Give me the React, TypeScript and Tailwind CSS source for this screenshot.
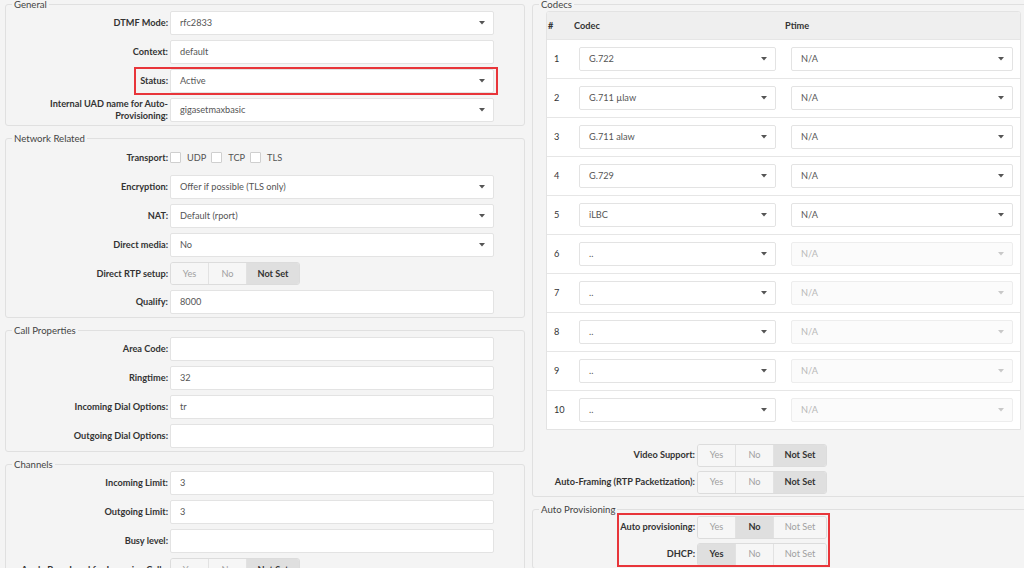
import { ReactNode } from 'react';
import clsx from 'clsx';

type Choice = 'Yes' | 'No' | 'Not Set';

function Caret({ light }: { light?: boolean }) {
  return (
    <svg width="6" height="4" viewBox="0 0 6 4" className={light ? 'fill-[#c8c8c8]' : 'fill-[#555]'}>
      <path d="M0 0h6L3 3.5z" />
    </svg>
  );
}

function Select({ value, disabled }: { value: string; disabled?: boolean }) {
  return (
    <div
      className={clsx(
        'flex h-[24px] w-full items-center justify-between rounded-[2px] border pl-[9px] pr-[8px] text-[9.2px]',
        disabled ? 'border-[#ededed] bg-[#fbfbfb] text-[#b8b8b8]' : 'border-[#e3e3e3] bg-white text-[#555]'
      )}
    >
      <span>{value}</span>
      <Caret light={disabled} />
    </div>
  );
}

function Input({ value }: { value?: string }) {
  return (
    <div className="flex h-[24px] w-full items-center rounded-[2px] border border-[#e3e3e3] bg-white pl-[9px] text-[9.2px] text-[#555]">
      {value}
    </div>
  );
}

function Toggle({ active }: { active: Choice }) {
  const options: Choice[] = ['Yes', 'No', 'Not Set'];
  return (
    <div className="flex h-[23px] w-[130px] overflow-hidden rounded-[3px] border border-[#dcdcdc] text-[9.2px]">
      {options.map((opt, i) => (
        <div
          key={opt}
          className={clsx(
            'flex items-center justify-center',
            i === 0 && 'w-[37px]',
            i === 1 && 'w-[38px] border-l border-[#e2e2e2]',
            i === 2 && 'flex-1 border-l border-[#e2e2e2]',
            opt === active ? 'bg-[#dfdfdf] font-bold text-[#333]' : 'bg-[#f6f6f6] text-[#a0a0a0]'
          )}
        >
          {opt}
        </div>
      ))}
    </div>
  );
}

function Checkbox({ label }: { label: string }) {
  return (
    <div className="flex items-center">
      <span className="mr-[6px] h-[11px] w-[11px] rounded-[1px] border border-[#cfcfcf] bg-white" />
      <span className="mr-[5px] text-[9.2px] text-[#555]">{label}</span>
    </div>
  );
}

function Row({ label, children, className }: { label: string; children: ReactNode; className?: string }) {
  return (
    <div className={clsx('flex items-center', className ?? 'h-[24px]')}>
      <div className="w-[164px] pr-[2px] text-right text-[9.2px] font-bold leading-[12px] text-[#333]">{label}</div>
      <div className="w-[324px]">{children}</div>
    </div>
  );
}

function Fieldset({ title, children, className }: { title: string; children: ReactNode; className?: string }) {
  return (
    <fieldset className={clsx('rounded-[3px] border border-[#e0e0e0] pb-[3px]', className)}>
      <legend className="ml-[6px] px-[2px] text-[9.6px] leading-[13px] text-[#444]">{title}</legend>
      {children}
    </fieldset>
  );
}

const codecs = [
  { codec: 'G.722', ptime: 'N/A' },
  { codec: 'G.711 µlaw', ptime: 'N/A' },
  { codec: 'G.711 alaw', ptime: 'N/A' },
  { codec: 'G.729', ptime: 'N/A' },
  { codec: 'iLBC', ptime: 'N/A' },
  { codec: '..', ptime: 'N/A', off: true },
  { codec: '..', ptime: 'N/A', off: true },
  { codec: '..', ptime: 'N/A', off: true },
  { codec: '..', ptime: 'N/A', off: true },
  { codec: '..', ptime: 'N/A', off: true },
];

export default function App() {
  return (
    <div className="h-[568px] w-[1024px] overflow-hidden bg-[#f4f4f4] font-['Lato','Noto_Sans',sans-serif] text-[#333]">
      <div className="-mt-[2px] flex gap-[7px] pl-[5px]">
        {/* left column */}
        <div className="flex w-[520px] shrink-0 flex-col gap-[6px]">
          <Fieldset title="General">
            <div className="flex flex-col gap-[5px]">
              <Row label="DTMF Mode:">
                <Select value="rfc2833" />
              </Row>
              <Row label="Context:">
                <Input value="default" />
              </Row>
              <div className="relative">
                <Row label="Status:">
                  <Select value="Active" />
                </Row>
                <div className="absolute -top-[2px] left-[128px] h-[28px] w-[364px] border-2 border-[#e8353a]" />
              </div>
              <Row label="Internal UAD name for Auto-Provisioning:">
                <Select value="gigasetmaxbasic" />
              </Row>
            </div>
          </Fieldset>

          <Fieldset title="Network Related">
            <div className="flex flex-col gap-[5px]">
              <Row label="Transport:" className="h-[25px]">
                <div className="flex items-center">
                  <Checkbox label="UDP" />
                  <Checkbox label="TCP" />
                  <Checkbox label="TLS" />
                </div>
              </Row>
              <Row label="Encryption:">
                <Select value="Offer if possible (TLS only)" />
              </Row>
              <Row label="NAT:">
                <Select value="Default (rport)" />
              </Row>
              <Row label="Direct media:">
                <Select value="No" />
              </Row>
              <Row label="Direct RTP setup:" className="h-[23px]">
                <Toggle active="Not Set" />
              </Row>
              <Row label="Qualify:">
                <Input value="8000" />
              </Row>
            </div>
          </Fieldset>

          <Fieldset title="Call Properties">
            <div className="flex flex-col gap-[5px]">
              <Row label="Area Code:">
                <Input />
              </Row>
              <Row label="Ringtime:">
                <Input value="32" />
              </Row>
              <Row label="Incoming Dial Options:">
                <Input value="tr" />
              </Row>
              <Row label="Outgoing Dial Options:">
                <Input />
              </Row>
            </div>
          </Fieldset>

          <Fieldset title="Channels">
            <div className="flex flex-col gap-[5px]">
              <Row label="Incoming Limit:">
                <Input value="3" />
              </Row>
              <Row label="Outgoing Limit:">
                <Input value="3" />
              </Row>
              <Row label="Busy level:">
                <Input />
              </Row>
              <Row label="Apply Busy Level for Incoming Calls:" className="h-[23px]">
                <Toggle active="Not Set" />
              </Row>
            </div>
          </Fieldset>
        </div>

        {/* right column */}
        <div className="flex w-[500px] shrink-0 flex-col gap-[6px]">
          <Fieldset title="Codecs">
            <div className="ml-[13px] w-[475px] overflow-hidden rounded-t-[3px] border border-[#e3e3e3] bg-white">
              <div className="grid h-[27px] grid-cols-[26px_212px_1fr] items-center bg-[#efefef] text-[9.2px] font-bold text-[#333]">
                <div className="pl-[1px]">#</div>
                <div className="pl-[1px]">Codec</div>
                <div>Ptime</div>
              </div>
              {codecs.map((c, i) => (
                <div
                  key={i}
                  className="grid h-[39px] grid-cols-[26px_212px_1fr] items-center border-t border-[#e6e6e6] text-[9.2px] text-[#333]"
                >
                  <div className="pl-[7px]">{i + 1}</div>
                  <div className="pl-[6px] pr-[9px]">
                    <Select value={c.codec} />
                  </div>
                  <div className="pl-[6px] pr-[7px]">
                    <Select value={c.ptime} disabled={c.off} />
                  </div>
                </div>
              ))}
            </div>
            <div className="mt-[14px] flex flex-col gap-[5px]">
              <Row label="Video Support:" className="h-[22px]">
                <Toggle active="Not Set" />
              </Row>
              <Row label="Auto-Framing (RTP Packetization):" className="h-[22px]">
                <Toggle active="Not Set" />
              </Row>
            </div>
          </Fieldset>

          <Fieldset title="Auto Provisioning">
            <div className="relative flex flex-col gap-[5px]">
              <Row label="Auto provisioning:" className="h-[22px]">
                <Toggle active="No" />
              </Row>
              <Row label="DHCP:" className="h-[22px]">
                <Toggle active="Yes" />
              </Row>
              <div className="absolute -top-[3px] left-[84px] h-[54px] w-[213px] border-2 border-[#e8353a]" />
            </div>
          </Fieldset>
        </div>
      </div>
    </div>
  );
}
